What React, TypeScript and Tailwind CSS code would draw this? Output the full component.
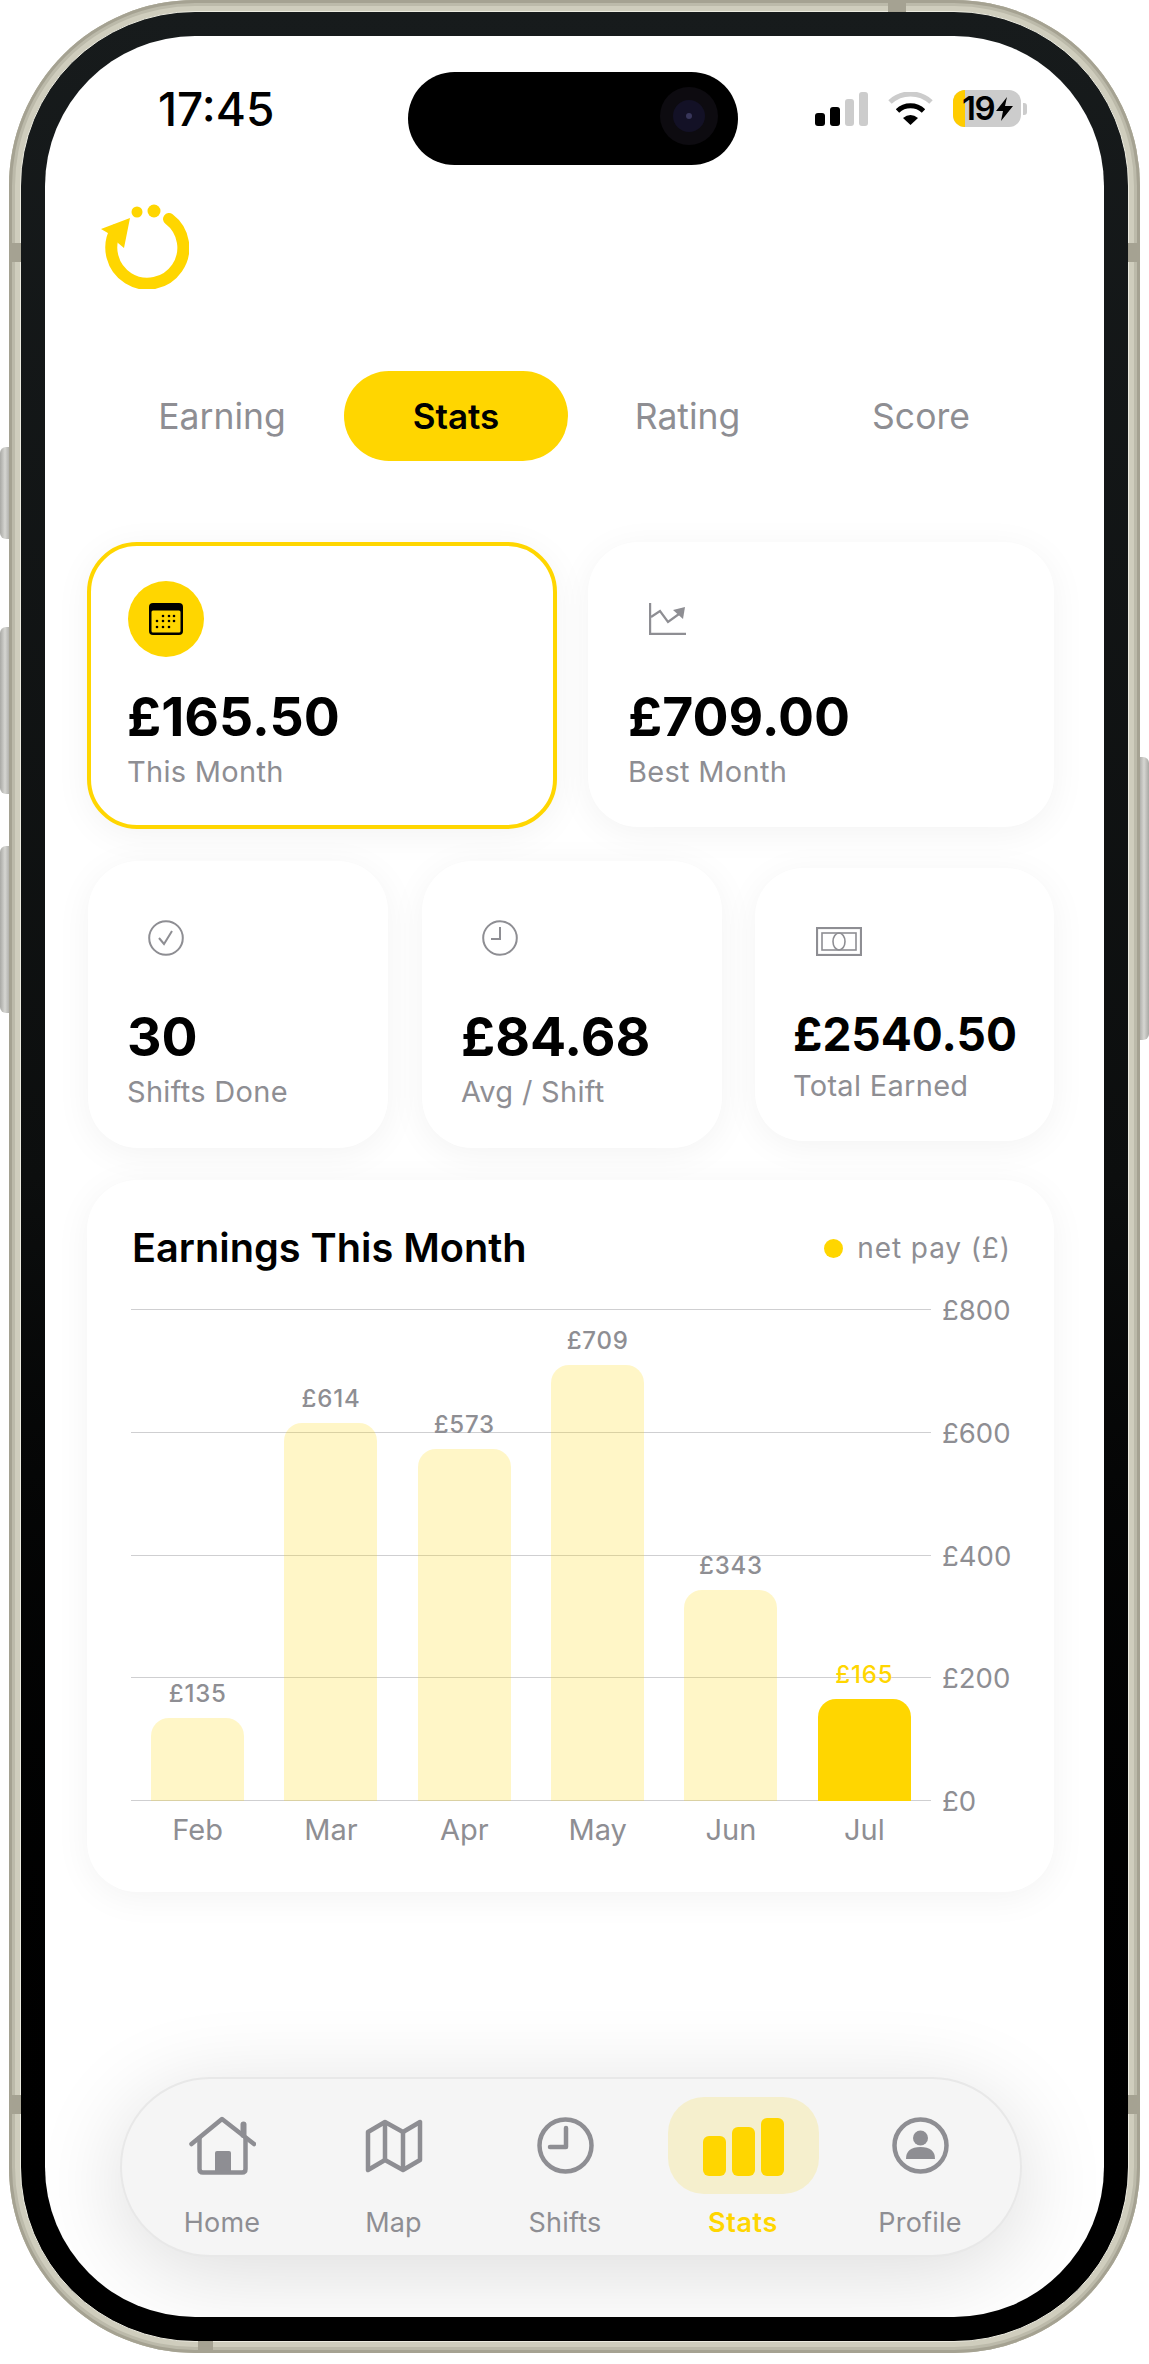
const yellow = "#ffd600";

const months = [
  { name: "Feb", value: 135 },
  { name: "Mar", value: 614 },
  { name: "Apr", value: 573 },
  { name: "May", value: 709 },
  { name: "Jun", value: 343 },
  { name: "Jul", value: 165.5, active: true },
];

const ticks = ["£800", "£600", "£400", "£200", "£0"];

function Logo() {
  return (
    <svg width="88" height="85" viewBox="0 0 88 85" fill="none">
      <path d="M68 15 A36 36 0 1 1 15 26" stroke={yellow} strokeWidth="12" strokeLinecap="round" />
      <polygon points="0,25 29,14 23,44 17,39 12,32" fill={yellow} />
      <circle cx="36" cy="8" r="5.5" fill={yellow} />
      <circle cx="53" cy="7" r="6.5" fill={yellow} />
    </svg>
  );
}

function Wifi() {
  return (
    <svg width="45" height="33" viewBox="0 0 45 33" fill="none">
      <path d="M2 10 A30 30 0 0 1 43 10" stroke="#cccccc" strokeWidth="5" />
      <path d="M9.5 19 A19 19 0 0 1 35.5 19" stroke="#000" strokeWidth="5" />
      <path d="M15 26 Q22.5 20 30 26 L22.5 33 Z" fill="#000" />
    </svg>
  );
}

function CalendarIcon() {
  const dots = [
    [14, 13], [20, 13], [25, 13],
    [8, 18], [14, 18], [20, 18], [25, 18],
    [8, 24], [14, 24], [20, 24],
  ];
  return (
    <svg width="34" height="32" viewBox="0 0 34 32">
      <rect width="34" height="32" rx="4" fill="#000" />
      <rect x="2.5" y="7.5" width="29" height="22" rx="1.5" fill={yellow} />
      {dots.map(([x, y]) => (
        <circle key={`${x}-${y}`} cx={x} cy={y} r="1.3" fill="#000" />
      ))}
    </svg>
  );
}

function TrendIcon() {
  return (
    <svg width="37" height="32" viewBox="0 0 37 32" fill="none" stroke="#8e8e93">
      <path d="M1 0 V31 H37" strokeWidth="2.4" />
      <path d="M2 14 L11 8 L19 19 L30 11" strokeWidth="2.2" />
      <polygon points="36,4 24,7 34,16" fill="#8e8e93" stroke="none" />
    </svg>
  );
}

function CheckIcon() {
  return (
    <svg width="36" height="36" viewBox="0 0 36 36" fill="none" stroke="#8e8e93" strokeWidth="2">
      <circle cx="18" cy="18" r="16.8" />
      <path d="M11 18 L16 24 L24 11" />
    </svg>
  );
}

function ClockIcon() {
  return (
    <svg width="36" height="36" viewBox="0 0 36 36" fill="none" stroke="#8e8e93" strokeWidth="2">
      <circle cx="18" cy="18" r="16.8" />
      <path d="M18 7 V19 H9" />
    </svg>
  );
}

function MoneyIcon() {
  return (
    <svg width="46" height="29" viewBox="0 0 46 29" fill="none" stroke="#8e8e93">
      <rect x="1" y="1" width="44" height="27" strokeWidth="2.2" />
      <rect x="6" y="6" width="34" height="17" strokeWidth="1.6" />
      <ellipse cx="23" cy="14.5" rx="6" ry="8.5" strokeWidth="1.6" />
    </svg>
  );
}

function NavHome() {
  return (
    <svg width="67" height="59" viewBox="0 0 67 59" fill="none" stroke="#8e8e93" strokeWidth="4.5" strokeLinecap="round" strokeLinejoin="round">
      <path d="M2.5 28 L33 3 L65 28" />
      <path d="M10.5 22 V53 Q10.5 56.5 14 56.5 H53 Q56.5 56.5 56.5 53 V22" />
      <path d="M54.5 19 V8.5" strokeWidth="6" />
      <rect x="26" y="35" width="16" height="22" rx="2" fill="#8e8e93" stroke="none" />
    </svg>
  );
}

function NavMap() {
  return (
    <svg width="58" height="54" viewBox="0 0 58 54" fill="none" stroke="#8e8e93" strokeWidth="4.5" strokeLinejoin="round">
      <path d="M3 13 L20 3 L38 13 L55 3 V41 L38 51 L20 41 L3 51 Z" />
      <path d="M20 3 V41" />
      <path d="M38 13 V51" />
    </svg>
  );
}

function NavClock() {
  return (
    <svg width="57" height="57" viewBox="0 0 57 57" fill="none" stroke="#8e8e93" strokeWidth="4.5" strokeLinecap="round">
      <circle cx="28.5" cy="28.5" r="26" />
      <path d="M29 11 V30 H13" strokeLinejoin="round" />
    </svg>
  );
}

function NavProfile() {
  return (
    <svg width="57" height="57" viewBox="0 0 57 57" fill="none">
      <circle cx="28.5" cy="28.5" r="26" stroke="#8e8e93" strokeWidth="4.5" />
      <circle cx="28.5" cy="21" r="7.5" fill="#8e8e93" />
      <path d="M14 42 Q14 30 28.5 30 Q43 30 43 42 Z" fill="#8e8e93" />
    </svg>
  );
}

function StatCard({
  icon,
  amount,
  label,
  className,
  amountClass,
  highlighted,
}: {
  icon: React.ReactNode;
  amount: string;
  label: string;
  className: string;
  amountClass: string;
  highlighted?: boolean;
}) {
  return (
    <div
      className={`rounded-[50px] border-4 bg-white pt-[35px] shadow-[0_6px_36px_rgba(0,0,0,0.05)] ${
        highlighted ? "border-[#ffd600]" : "border-transparent"
      } ${className}`}
    >
      <div className={`ml-px flex h-[76px] w-[76px] items-center justify-center rounded-full ${highlighted ? "bg-[#ffd600]" : ""}`}>
        {icon}
      </div>
      <div className={`text-[53.5px] leading-none font-bold text-black ${amountClass}`}>{amount}</div>
      <div className="mt-[13px] text-[29px] leading-none tracking-[0.3px] text-[#8e8e93]">{label}</div>
    </div>
  );
}

function NavItem({ icon, label, width }: { icon: React.ReactNode; label: string; width: string }) {
  return (
    <div className={`flex flex-col items-center ${width}`}>
      <div className="flex h-[97px] items-center justify-center">{icon}</div>
      <div className="mt-[15px] text-[27px] leading-none tracking-[0.2px] text-[#8e8e93]">{label}</div>
    </div>
  );
}

export default function App() {
  return (
    <div className="relative h-[2364px] w-[1149px] overflow-hidden bg-white font-[Inter,sans-serif]">
      {/* side buttons */}
      <div className="absolute top-[447px] left-0 h-[92px] w-[10px] rounded-l-[6px] bg-gradient-to-r from-[#a9a9a5] via-[#d6d6d2] to-[#a9a9a5]"></div>
      <div className="absolute top-[627px] left-0 h-[167px] w-[10px] rounded-l-[6px] bg-gradient-to-r from-[#a9a9a5] via-[#d6d6d2] to-[#a9a9a5]"></div>
      <div className="absolute top-[846px] left-0 h-[167px] w-[10px] rounded-l-[6px] bg-gradient-to-r from-[#a9a9a5] via-[#d6d6d2] to-[#a9a9a5]"></div>
      <div className="absolute top-[757px] right-0 h-[283px] w-[10px] rounded-r-[6px] bg-gradient-to-r from-[#a9a9a5] via-[#d6d6d2] to-[#a9a9a5]"></div>

      {/* phone frame */}
      <div className="relative ml-[9px] h-[2353px] w-[1131px] rounded-[186px] bg-[#cfcdbd] p-[11px] shadow-[inset_0_0_0_3px_#a5a292,inset_0_0_0_6px_#bcbaaa]">
        {/* antenna bands */}
        <div className="absolute top-[243px] left-0 h-[19px] w-[12px] bg-[#a5a292]"></div>
        <div className="absolute top-[243px] right-0 h-[19px] w-[12px] bg-[#a5a292]"></div>
        <div className="absolute top-[2095px] left-0 h-[19px] w-[12px] bg-[#a5a292]"></div>
        <div className="absolute top-[2095px] right-0 h-[19px] w-[12px] bg-[#a5a292]"></div>
        <div className="absolute top-0 left-[879px] h-[12px] w-[18px] bg-[#a5a292]"></div>
        <div className="absolute bottom-0 left-[189px] h-[12px] w-[15px] bg-[#a5a292]"></div>

        <div className="h-full rounded-[175px] border border-[#ecebe0] bg-gradient-to-b from-[#171b1c] via-[#0c0e0e] to-black p-[24px]">
          <div className="relative flex h-full flex-col overflow-hidden rounded-[150px] bg-white">
            {/* dynamic island */}
            <div className="absolute top-[36px] left-[363px] flex h-[93px] w-[330px] items-center justify-end rounded-full bg-black pr-[20px]">
              <div className="mb-[5px] flex h-[58px] w-[58px] items-center justify-center rounded-full bg-[#0d0b10]">
                <div className="flex h-[32px] w-[32px] items-center justify-center rounded-full bg-[#131126]">
                  <div className="h-[6px] w-[6px] rounded-full bg-[#38365a]"></div>
                </div>
              </div>
            </div>

            {/* status bar */}
            <div className="mt-[54px] flex h-[37px] items-center pr-[77px] pl-[113px]">
              <div className="text-[46px] leading-none font-medium text-black">17:45</div>
              <div className="ml-auto flex items-center gap-[20px]">
                <div className="flex h-[34px] items-end gap-[5px]">
                  <div className="h-[13px] w-[10px] rounded-[3px] bg-black"></div>
                  <div className="h-[19px] w-[10px] rounded-[3px] bg-black"></div>
                  <div className="h-[27px] w-[9px] rounded-[3px] bg-[#cccccc]"></div>
                  <div className="h-[34px] w-[9px] rounded-[3px] bg-[#cccccc]"></div>
                </div>
                <Wifi />
                <div className="flex items-center gap-[2px]">
                  <div className="relative flex h-[37px] w-[68px] items-center rounded-[12px] bg-[#cccccc] pl-[9px]">
                    <div className="absolute inset-y-0 left-0 w-[12px] rounded-l-[12px] bg-[#ffcc00]"></div>
                    <div className="relative text-[33px] leading-none font-semibold tracking-[-1.5px] text-black">19</div>
                    <svg className="relative ml-[2px] shrink-0" width="17" height="24" viewBox="0 0 17 24">
                      <polygon points="11,0 0,14 7,14 5,24 17,9 9,9" fill="#000" />
                    </svg>
                  </div>
                  <div className="h-[12px] w-[4px] rounded-r-[3px] bg-[#cccccc]"></div>
                </div>
              </div>
            </div>

            {/* logo */}
            <div className="mt-[77px] ml-[56px]">
              <Logo />
            </div>

            {/* tabs */}
            <div className="mt-[82px] ml-[60px] flex h-[90px] items-center text-[35.5px] text-[#8e8e93]">
              <div className="w-[234px] pt-[2px] text-center">Earning</div>
              <div className="ml-[5px] flex h-[90px] w-[224px] items-center justify-center rounded-[45px] bg-[#ffd600] text-[35px] font-semibold text-black">
                Stats
              </div>
              <div className="w-[239px] pt-[2px] text-center">Rating</div>
              <div className="w-[228px] pt-[2px] text-center">Score</div>
            </div>

            <div className="mt-[81px] flex flex-col gap-[32px] pr-[50px] pl-[42px]">
              {/* top cards */}
              <div className="flex h-[287px] items-start gap-[31px]">
                <StatCard className="h-[287px] w-[470px] pl-[36px]" amountClass="mt-[33px]" icon={<CalendarIcon />} amount="£165.50" label="This Month" highlighted />
                <StatCard className="h-[285px] flex-1 pl-[36px]" amountClass="mt-[33px]" icon={<TrendIcon />} amount="£709.00" label="Best Month" />
              </div>

              {/* second row */}
              <div className="flex items-center gap-[34px] pl-px">
                <StatCard className="h-[287px] w-[300px] pl-[35px]" amountClass="mt-[34px]" icon={<CheckIcon />} amount="30" label="Shifts Done" />
                <StatCard className="h-[287px] w-[300px] pl-[35px]" amountClass="mt-[34px]" icon={<ClockIcon />} amount="£84.68" label="Avg / Shift" />
                <div className="-ml-px h-[273px] flex-1 rounded-[48px] bg-white pt-[37px] pl-[38px] shadow-[0_6px_36px_rgba(0,0,0,0.05)]">
                  <div className="flex h-[73px] w-[73px] items-center justify-center pl-[18px]">
                    <MoneyIcon />
                  </div>
                  <div className="mt-[33px] text-[46px] leading-none font-bold text-black">£2540.50</div>
                  <div className="mt-[14px] text-[29px] leading-none tracking-[0.3px] text-[#8e8e93]">Total Earned</div>
                </div>
              </div>

              {/* earnings chart */}
              <div className="h-[712px] rounded-[50px] bg-white pt-[46px] pl-[44px] shadow-[0_6px_36px_rgba(0,0,0,0.05)]">
                <div className="flex h-[44px] items-center pr-[43px]">
                  <div className="pt-[2px] pl-px text-[39.7px] leading-none font-semibold text-black">Earnings This Month</div>
                  <div className="ml-auto flex items-center gap-[14px]">
                    <div className="h-[19px] w-[19px] rounded-full bg-[#ffd600]"></div>
                    <div className="text-[28px] leading-none tracking-[0.9px] text-[#8e8e93]">net pay (£)</div>
                  </div>
                </div>

                <div className="relative mt-[39px] h-[492px] w-[800px]">
                  {/* grid lines with tick labels */}
                  <div className="absolute inset-0 flex flex-col justify-between">
                    {ticks.map((tick) => (
                      <div key={tick} className="relative h-px bg-[#cfcfd1]">
                        <div className="absolute top-[-13px] left-[811px] text-[27.5px] leading-[28px] text-[#8e8e93]">{tick}</div>
                      </div>
                    ))}
                  </div>

                  {/* bars */}
                  <div className="absolute inset-0 grid grid-cols-6 items-end">
                    {months.map((m) => (
                      <div key={m.name} className="flex flex-col items-center">
                        <div className={`mb-[12px] text-[24px] leading-none font-medium tracking-[0.8px] ${m.active ? "text-[#ffd600]" : "text-[#8e8e93]"}`}>
                          £{Math.floor(m.value)}
                        </div>
                        <div
                          className={`w-[93px] rounded-t-[18px] ${m.active ? "bg-[#ffd600]" : "bg-[#ffd600]/22"}`}
                          style={{ height: m.value * 0.615 }}
                        ></div>
                      </div>
                    ))}
                  </div>
                </div>

                {/* month labels */}
                <div className="mt-[14px] grid w-[800px] grid-cols-6 text-center text-[29px] leading-none text-[#8e8e93]">
                  {months.map((m) => (
                    <div key={m.name}>{m.name}</div>
                  ))}
                </div>
              </div>
            </div>

            {/* bottom nav */}
            <div className="mt-auto mb-[60px] ml-[75px] flex h-[180px] w-[902px] rounded-[90px] border-2 border-[#e8e8e8] bg-[#f5f5f5] pt-[18px] pl-[14px] shadow-[0_16px_90px_rgba(0,0,0,0.14)]">
              <NavItem width="w-[172px]" icon={<NavHome />} label="Home" />
              <NavItem width="w-[171px]" icon={<NavMap />} label="Map" />
              <NavItem width="w-[172px]" icon={<NavClock />} label="Shifts" />
              <div className="ml-[3px] flex w-[178px] flex-col items-center">
                <div className="flex h-[97px] w-[151px] items-end justify-center gap-[6px] rounded-[36px] bg-[#f5efcd] pb-[18px]">
                  <div className="h-[40px] w-[23px] rounded-[6px] bg-[#ffd600]"></div>
                  <div className="h-[49px] w-[23px] rounded-[6px] bg-[#ffd600]"></div>
                  <div className="h-[58px] w-[23px] rounded-[6px] bg-[#ffd600]"></div>
                </div>
                <div className="mt-[15px] text-[27px] leading-none font-semibold tracking-[0.6px] text-[#ffd600]">Stats</div>
              </div>
              <NavItem width="w-[176px]" icon={<NavProfile />} label="Profile" />
            </div>
          </div>
        </div>
      </div>
    </div>
  );
}
